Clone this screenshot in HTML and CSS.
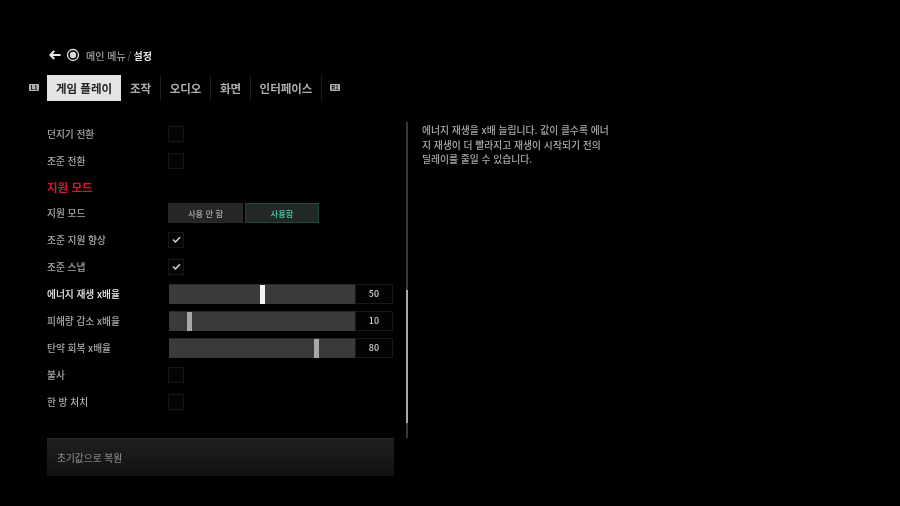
FILE: index.html
```html
<!DOCTYPE html>
<html lang="ko">
<head>
<meta charset="utf-8">
<title>설정</title>
<link rel="stylesheet" href="styles.css">
</head>
<body>
<div class="page">
  <header class="crumbs">
    <svg class="back" viewBox="0 0 12 10" width="12" height="10"><path d="M5.2 1 1.4 5l3.8 4M1.6 5H11.6" fill="none" stroke="#e8e8e8" stroke-width="2"/></svg>
    <svg class="disc" viewBox="0 0 14 14" width="14" height="14"><circle cx="7" cy="7" r="5.5" fill="none" stroke="#ddd" stroke-width="1.3"/><circle cx="7" cy="7" r="3.2" fill="#d8d8d8"/></svg>
    <span class="crumb">메인 메뉴</span><span class="slash">/</span><span class="crumb-now">설정</span>
  </header>
  <nav class="tabs">
    <span class="pad">L1</span>
    <span class="tab active">게임 플레이</span>
    <span class="tab sep t2">조작</span>
    <span class="tab sep t3">오디오</span>
    <span class="tab sep t4">화면</span>
    <span class="tab sep t5">인터페이스</span>
    <span class="pad r">R1</span>
  </nav>
  <main class="content">
    <section class="left">
      <div class="list">
        <div class="row"><span class="label">던지기 전환</span><span class="check"></span></div>
        <div class="row"><span class="label">조준 전환</span><span class="check"></span></div>
        <h2 class="heading">지원 모드</h2>
        <div class="row"><span class="label">지원 모드</span>
          <div class="seg"><span class="opt">사용 안 함</span><span class="opt on">사용함</span></div>
        </div>
        <div class="row"><span class="label">조준 지원 향상</span><span class="check"><svg viewBox="0 0 10 8" width="9" height="7"><path d="M1 4l2.8 2.8L9 1.4" fill="none" stroke="#ccc" stroke-width="1.8"/></svg></span></div>
        <div class="row"><span class="label">조준 스냅</span><span class="check"><svg viewBox="0 0 10 8" width="9" height="7"><path d="M1 4l2.8 2.8L9 1.4" fill="none" stroke="#ccc" stroke-width="1.8"/></svg></span></div>
        <div class="row"><span class="label hot">에너지 재생 x배율</span>
          <div class="slider"><div class="track"><span class="thumb hot-t" style="margin-left:91px"></span></div><span class="val">50</span></div>
        </div>
        <div class="row"><span class="label">피해량 감소 x배율</span>
          <div class="slider"><div class="track"><span class="thumb" style="margin-left:18px"></span></div><span class="val">10</span></div>
        </div>
        <div class="row"><span class="label">탄약 회복 x배율</span>
          <div class="slider"><div class="track"><span class="thumb" style="margin-left:145px"></span></div><span class="val">80</span></div>
        </div>
        <div class="row"><span class="label">불사</span><span class="check"></span></div>
        <div class="row"><span class="label">한 방 처치</span><span class="check"></span></div>
      </div>
      <button class="reset">초기값으로 복원</button>
    </section>
    <div class="scroll"><span class="scroll-thumb"></span></div>
    <p class="desc">에너지 재생을 x배 늘립니다. 값이 클수록 에너<br>지 재생이 더 빨라지고 재생이 시작되기 전의<br>딜레이를 줄일 수 있습니다.</p>
  </main>
</div>
</body>
</html>
```
FILE: styles.css
```css
* { box-sizing: border-box; }
html, body { margin: 0; height: 100%; background: #000; }
body { font-family: "Noto Sans CJK KR", "Noto Sans", sans-serif; color: #a8a8a8; overflow: hidden; }
.page { width: 900px; height: 506px; padding: 48px 0 0 29px; will-change: transform; }

.crumbs { display: flex; align-items: center; height: 14px; padding-left: 20px; font-size: 10px; font-weight: 500; }
.back { margin-right: 5px; }
.disc { margin-right: 6px; }
.crumb { color: #a0a0a0; }
.slash { color: #666; margin: 0 2px 0 2px; }
.crumb-now { color: #e8e8e8; font-weight: 700; }

.tabs { display: flex; align-items: stretch; height: 26px; margin-top: 13px; font-size: 11.5px; font-weight: 700; }
.pad { align-self: center; width: 10px; height: 7px; margin: 0 8px 2px 0; background: #b0b0b0; color: #111; font-size: 6px; font-weight: 700; line-height: 7px; text-align: center; border-radius: 1px; overflow: hidden; }
.pad.r { margin: 0 0 2px 8px; }
.tab { display: flex; align-items: center; justify-content: center; color: #aeaeae; }
.tab.active { width: 74px; background: #e4e4e4; color: #222; }
.tab.sep { border-right: 1px solid #1e1e1e; }
.t2 { width: 40px; }
.t3 { width: 50px; }
.t4 { width: 40px; }
.t5 { width: 71px; }

.content { display: flex; align-items: flex-start; margin-top: 19px; padding-left: 18px; }
.left { width: 347px; }
.list { display: flex; flex-direction: column; height: 294px; }
.row { display: flex; align-items: center; height: 27px; flex: none; font-size: 9.7px; font-weight: 500; }
.label { width: 121px; padding-top: 1px; color: #aaa; }
.label.hot { color: #f0f0f0; }
.heading { height: 25px; margin: 0; padding-top: 1px; color: #d9123a; font-size: 11.5px; font-weight: 700; line-height: 25px; }
.check { display: flex; align-items: center; justify-content: center; width: 16px; height: 16px; border: 1px solid #161616; background: #040404; }

.seg { display: flex; gap: 2px; font-size: 8.3px; }
.opt { display: flex; align-items: center; justify-content: center; width: 75px; height: 20px; background: #262626; border: 1px solid #2a2a2a; color: #a8a8a8; }
.opt.on { width: 74px; border-color: #1a4a40; color: #33d0a6; background: #232726; }

.slider { display: flex; width: 225px; height: 20px; padding-left: 1px; }
.track { width: 186px; height: 20px; background: #3a3a3a; border-top: 1px solid #2a2a2a; }
.thumb { display: block; width: 5px; height: 19px; background: #a8a8a8; }
.hot-t { background: #f5f5f5; }
.val { display: flex; align-items: center; justify-content: center; width: 38px; border: 1px solid #181818; font-size: 9px; color: #d0d0d0; background: #030303; }

.reset { display: block; width: 347px; height: 38px; margin-top: 24px; padding: 0 0 0 10px; border: 0; border-top: 1px solid #2a2a2a; background: linear-gradient(#1f1f1f, #121212); color: #808080; font: inherit; font-size: 9.7px; font-weight: 500; text-align: left; }

.scroll { position: relative; width: 2px; height: 316px; margin: 2px 0 0 12px; background: #3a3a3a; }
.scroll-thumb { display: block; width: 2px; height: 133px; background: #a8a8a8; position: absolute; top: 168px; left: 0; }

.desc { margin: 3px 0 0 14px; font-size: 9.8px; font-weight: 500; line-height: 14.5px; color: #aaa; white-space: nowrap; }
```
